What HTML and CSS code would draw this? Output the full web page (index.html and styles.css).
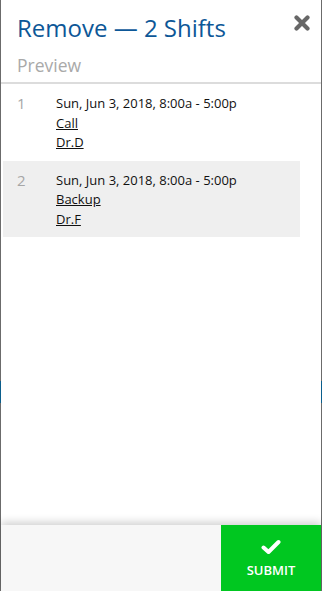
FILE: index.html
```html
<!DOCTYPE html>
<html lang="en">
<head>
<meta charset="utf-8">
<link rel="stylesheet" href="styles.css">
</head>
<body>
<div class="backdrop">
  <div class="modal">
    <header class="head">
      <div class="title-row">
        <h1 class="title">Remove — 2 Shifts</h1>
        <button class="close" aria-label="Close">
          <svg width="16" height="16" viewBox="0 0 16 16"><path d="M2.5 2.5 L13.5 13.5 M13.5 2.5 L2.5 13.5" stroke="#676767" stroke-width="4.2" stroke-linecap="round"/></svg>
        </button>
      </div>
      <div class="sub">Preview</div>
    </header>
    <div class="content">
      <ol class="list">
        <li class="item">
          <span class="num">1</span>
          <div class="info">
            <div>Sun, Jun 3, 2018, 8:00a - 5:00p</div>
            <a class="lnk" href="#">Call</a>
            <a class="lnk" href="#">Dr.D</a>
          </div>
        </li>
        <li class="item alt">
          <span class="num">2</span>
          <div class="info">
            <div>Sun, Jun 3, 2018, 8:00a - 5:00p</div>
            <a class="lnk" href="#">Backup</a>
            <a class="lnk" href="#">Dr.F</a>
          </div>
        </li>
      </ol>
    </div>
    <footer class="foot">
      <div class="spacer"></div>
      <button class="submit">
        <svg width="20" height="16" viewBox="0 0 20 16"><path d="M2.5 8.5 L7.5 13 L17.5 3" fill="none" stroke="#fff" stroke-width="4" stroke-linecap="round" stroke-linejoin="round"/></svg>
        <span>SUBMIT</span>
      </button>
    </footer>
  </div>
</div>
</body>
</html>
```

FILE: styles.css
```css
* { box-sizing: border-box; }
html, body { margin: 0; padding: 0; height: 100%; }
body { font-family: "Open Sans", "Noto Sans", sans-serif; }

.backdrop {
  height: 591px;
  padding: 0 1px;
  background: linear-gradient(to bottom, #6b6b6b 0, #6b6b6b 381px, #0b5e8c 381px, #0b5e8c 403px, #6b6b6b 403px);
}

.modal {
  height: 100%;
  background: #fff;
  display: flex;
  flex-direction: column;
}

.head { padding: 12px 10px 0 16px; }
.title-row { display: flex; justify-content: space-between; align-items: flex-start; }
.title {
  margin: 0;
  font-size: 24px;
  font-weight: 400;
  line-height: 32px;
  color: #0d5797;
}
.close {
  border: 0; background: none; padding: 0; margin: 2px 0 0 0;
  width: 18px; height: 18px; display: flex; align-items: center; justify-content: center;
  cursor: pointer;
}
.sub {
  margin-top: 10px;
  font-size: 17.5px;
  line-height: 22px;
  color: #a9a9a9;
  padding-bottom: 6px;
  border-bottom: 2px solid #dcdcdc;
  margin-left: -16px;
  margin-right: -10px;
  padding-left: 16px;
}

.content { flex: 1; overflow: hidden; }
.list { list-style: none; margin: 0 21px 0 2px; padding: 0; }
.item {
  display: flex;
  padding: 10px 0 8px 14px;
  font-size: 13px;
  line-height: 19.5px;
  color: #111;
}
.item.alt { background: #efefef; }
.num { width: 39px; color: #a6a6a6; font-size: 15px; line-height: 19.5px; }
.info { display: flex; flex-direction: column; align-items: flex-start; }
.lnk { color: #111; text-decoration: underline; }

.foot {
  height: 66px;
  display: flex;
  background: #f7f7f7;
  box-shadow: 0 -3px 8px rgba(0,0,0,0.18);
  position: relative;
}
.spacer { flex: 1; }
.submit {
  width: 100px;
  border: 0;
  background: #00c720;
  color: #fff;
  font-family: inherit;
  font-size: 13px;
  font-weight: 600;
  display: flex;
  flex-direction: column;
  align-items: center;
  justify-content: center;
  gap: 6px;
  padding: 2px 0 0;
  cursor: pointer;
}
```
